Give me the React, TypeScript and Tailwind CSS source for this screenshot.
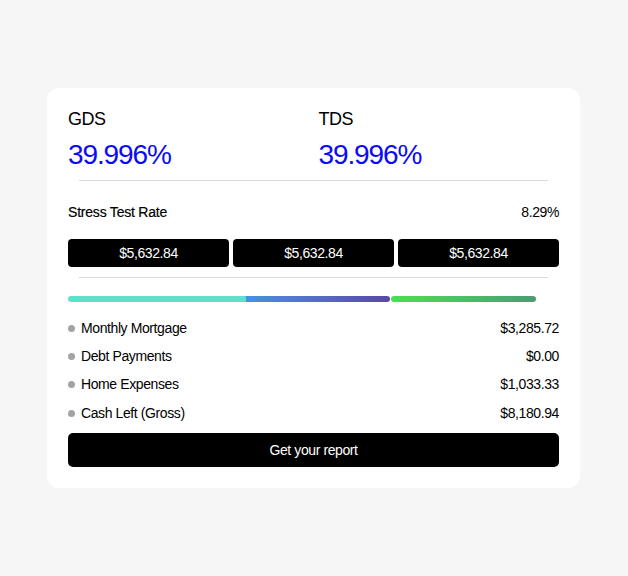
import React from "react";

const rows = [
  ["Monthly Mortgage", "$3,285.72"],
  ["Debt Payments", "$0.00"],
  ["Home Expenses", "$1,033.33"],
  ["Cash Left (Gross)", "$8,180.94"],
];

export default function App() {
  return (
    <div
      className="w-[628px] h-[576px] bg-[#f6f6f6] pt-[88px] pl-[47px] tracking-tight text-black"
      style={{ fontFamily: '"Liberation Sans", Arial, sans-serif' }}
    >
      <div className="w-[533px] bg-white rounded-xl px-[21px] pt-[20px] pb-[21px]">
        <div className="grid grid-cols-2 gap-[10px]">
          {["GDS", "TDS"].map((k) => (
            <div key={k} className="flex flex-col">
              <div className="text-[18px] leading-[22px] tracking-[-0.03em]">{k}</div>
              <div className="mt-2 text-[28px] leading-[34px] tracking-[-0.04em] text-[#0b0bf5]">39.996%</div>
            </div>
          ))}
        </div>
        <div className="mt-2 mx-[11px] h-px bg-[#dadada]" />
        <div className="mt-[21px] flex justify-between text-[14px] leading-[20px]">
          <span className="tracking-[-0.015em] [-webkit-text-stroke:0.2px_black]">Stress Test Rate</span>
          <span>8.29%</span>
        </div>
        <div className="mt-[17px] grid grid-cols-3 gap-1">
          {[0, 1, 2].map((i) => (
            <div
              key={i}
              className="h-[28px] bg-black rounded-[4px] text-white text-[14px] flex items-center justify-center"
            >
              $5,632.84
            </div>
          ))}
        </div>
        <div className="mt-[10px] mx-[11px] h-px bg-[#dadada]" />
        <div className="mt-[18px] flex h-[6px] w-[468px]">
          <div className="w-[178px] h-full rounded-l-full bg-[#5fe0c8]" />
          <div className="w-[145px] h-full rounded-r-full bg-gradient-to-r from-[#4b8fe0] to-[#574a9e]" />
          <div className="ml-px w-[145px] h-full rounded-full bg-gradient-to-r from-[#48e052] to-[#4f9a72]" />
        </div>
        <div className="mt-[12px] flex flex-col">
          {rows.map(([l, v]) => (
            <div key={l} className="h-[28.33px] flex items-center justify-between text-[14px]">
              <div className="flex items-center">
                <span className="w-[7px] h-[7px] rounded-full bg-[#a3a3a3]" />
                <span className="ml-[6px]">{l}</span>
              </div>
              <span>{v}</span>
            </div>
          ))}
        </div>
        <button className="mt-[6px] w-full h-[34px] bg-black rounded-[5px] text-white text-[14px] flex items-center justify-center">
          Get your report
        </button>
      </div>
    </div>
  );
}
